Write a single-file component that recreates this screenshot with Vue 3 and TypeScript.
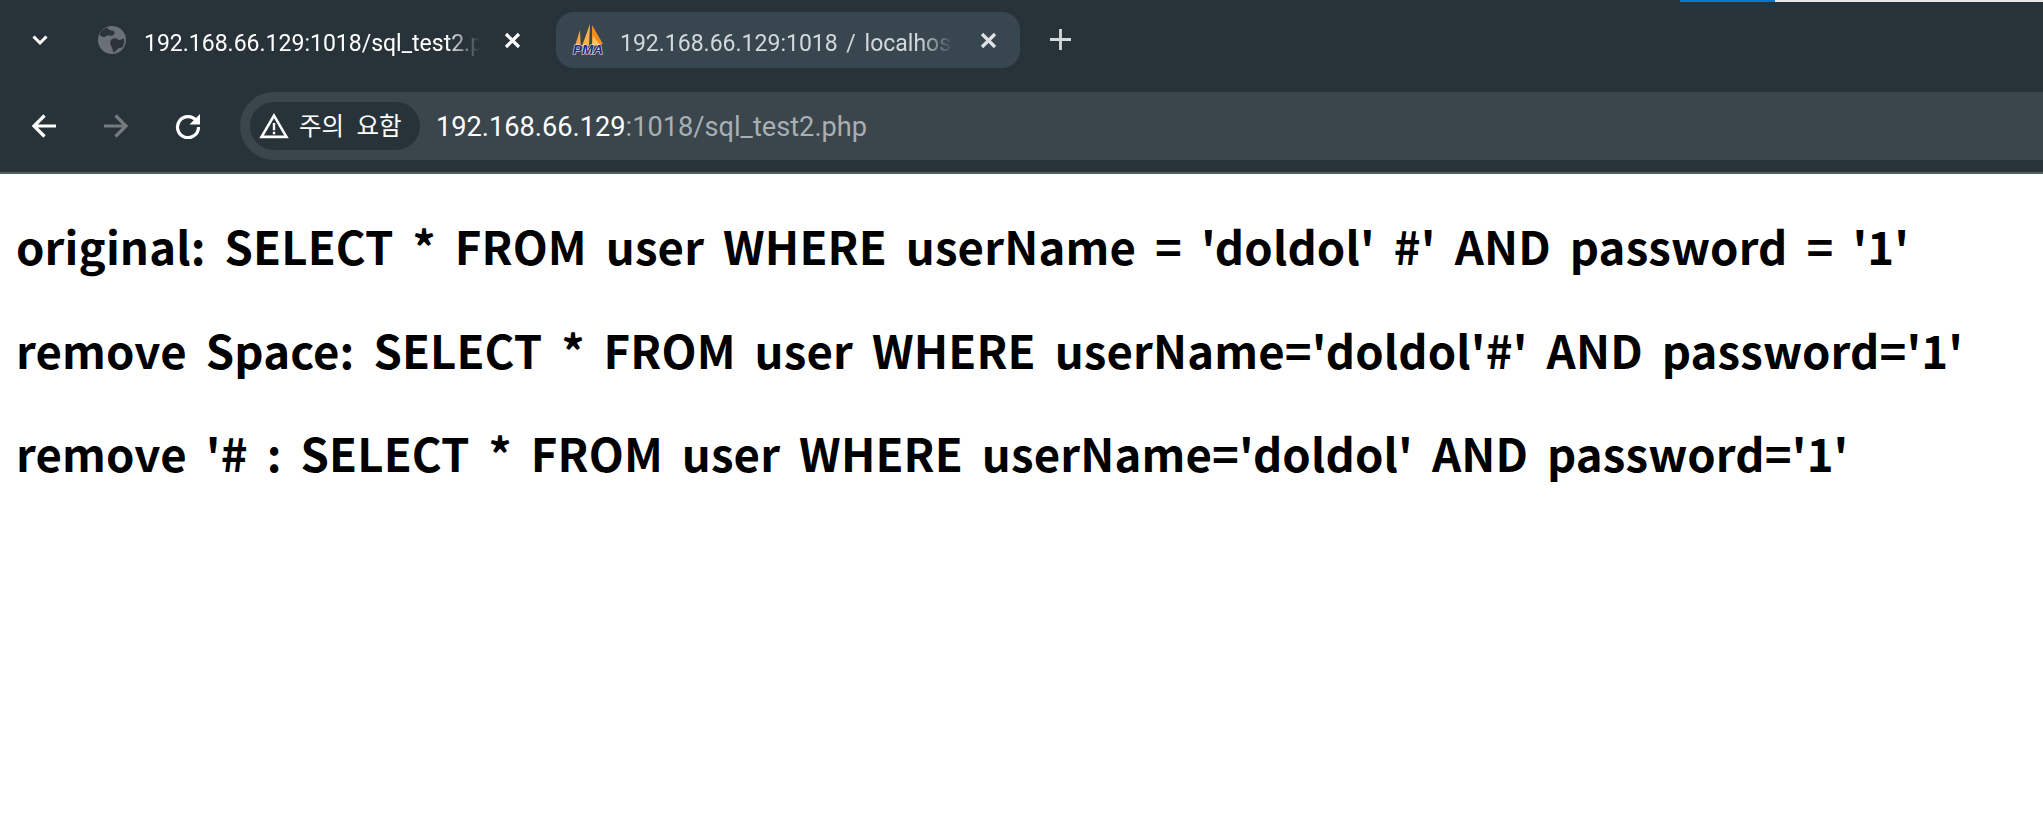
<script setup lang="ts">
const lines: string[] = [
  "original: SELECT * FROM user WHERE userName = 'doldol' #' AND password = '1'",
  "remove Space: SELECT * FROM user WHERE userName='doldol'#' AND password='1'",
  "remove '# : SELECT * FROM user WHERE userName='doldol' AND password='1'",
]
</script>

<template>
  <div class="page">
    <header class="chrome">
      <div class="progress"><span class="progress-blue"></span><span class="progress-light"></span></div>
      <div class="tabstrip">
        <button class="tab-search" aria-label="탭 검색">
          <svg width="18" height="12" viewBox="0 0 18 12"><path d="M2.500 2.500 9 9l6.500-6.500" fill="none" stroke="#fff" stroke-width="3"/></svg>
        </button>
        <div class="tab tab-inactive">
          <svg class="favicon" width="28" height="28" viewBox="0 0 27 27">
            <circle cx="13.500" cy="13.500" r="13.500" fill="#6b7076"/>
            <path d="M9 1.500c1 2.500 3 3 5 3 2.500 0 2.500 2.500 1 4-1.500 1.500-3 1-5 .5-1.500-.4-2 1-3.500 1.500-2 .7-3.500-.5-5-2C2.500 5 5.500 2.500 9 1.500ZM13 13c2-1.500 4-1.500 6 0 1.500 1 3.500 0 6-1 .8 3 0 6-1.500 8.500-2 1-4 .5-5 2-1 1.500-2 2.500-3.500 3-1-2-1-4-2-5.500s-2-5 0-7Z" fill="#2a343a"/>
          </svg>
          <span class="tab-title">192.168.66.129:1018/sql_test2.php</span>
          <svg class="close" width="17" height="17" viewBox="0 0 17 17"><path d="M2 2l13 13M15 2 2 15" stroke="#fff" stroke-width="3.200"/></svg>
        </div>
        <div class="tab tab-other">
          <svg class="favicon" width="32" height="32" viewBox="0 0 32 32">
            <path d="M3 22 8 6l.7 16Z" fill="#f9a63e"/>
            <path d="M10 22 18 0l-1 22Z" fill="#fab04c"/>
            <path d="M20 22V1l11 19Z" fill="#f28c1c"/>
            <path d="M21 12l7 9-8 1Z" fill="#fcc066"/>
            <text x="16" y="30" text-anchor="middle" class="pma">PMA</text>
          </svg>
          <span class="tab-title dim">192.168.66.129:1018 / localhost / sql_test</span>
          <svg class="close" width="17" height="17" viewBox="0 0 17 17"><path d="M2 2l13 13M15 2 2 15" stroke="#dfe2e4" stroke-width="3.200"/></svg>
        </div>
        <button class="new-tab" aria-label="새 탭">
          <svg width="21" height="21" viewBox="0 0 21 21"><path d="M10.500 0v21M0 10.500h21" stroke="#d5d8da" stroke-width="2.800"/></svg>
        </button>
      </div>
      <div class="toolbar">
        <div class="nav">
          <svg width="26" height="26" viewBox="0 0 26 26"><path d="M25 13H4M13.500 2.500 3 13l10.500 10.500" fill="none" stroke="#fff" stroke-width="3.200"/></svg>
          <svg width="26" height="26" viewBox="0 0 26 26"><path d="M1 13h21M12.500 2.500 23 13 12.500 23.500" fill="none" stroke="#747a7e" stroke-width="3.200"/></svg>
          <svg width="26" height="26" viewBox="0 0 26 26"><path d="M21.500 8A10.500 10.500 0 1 0 23.500 14" fill="none" stroke="#fff" stroke-width="3.200"/><path d="M25 1v10.500H14.500Z" fill="#fff"/></svg>
        </div>
        <div class="omnibox">
          <div class="chip">
            <svg width="30" height="26" viewBox="0 0 28 25"><path d="M14 2.500 26 23H2Z" fill="none" stroke="#fff" stroke-width="2.500"/><path d="M14 9.500v7M14 18v2.500" stroke="#fff" stroke-width="2.300"/></svg>
            <span class="chip-label">주의 요함</span>
          </div>
          <div class="url"><span class="host">192.168.66.129</span><span class="rest">:1018/sql_test2.php</span></div>
        </div>
      </div>
    </header>
    <main class="content">
      <h1 v-for="line in lines" :key="line">{{ line }}</h1>
    </main>
  </div>
</template>

<style scoped>
.page { width: 2043px; height: 821px; overflow: hidden; background: #fff; font-family: Roboto, "Noto Sans CJK KR", sans-serif; }
.chrome { position: relative; background: #283239; border-bottom: 2px solid #555f63; height: 172px; }
.progress { position: absolute; top: 0; left: 1680px; right: 0; height: 2px; display: flex; }
.progress-blue { width: 95px; background: #0078d4; }
.progress-light { flex: 1; background: #e8e8e8; }
.tabstrip { height: 92px; display: flex; align-items: flex-start; padding-top: 12px; box-sizing: border-box; }
.tab-search { width: 80px; height: 56px; padding: 0; border: 0; background: none; display: flex; align-items: center; justify-content: center; }
.tab { height: 56px; display: flex; align-items: center; box-sizing: border-box; border-radius: 18px; }
.tab-inactive { width: 460px; margin-right: 16px; padding-left: 18px; padding-right: 19px; }
.tab-other { width: 464px; background: #37464f; padding-left: 16px; padding-right: 23px; }
.favicon { flex: none; overflow: visible; }
.close { flex: none; }
.tab-title { margin-top: 6px; flex: 1; min-width: 0; overflow: hidden; white-space: nowrap; font-size: 23px; color: #fff; -webkit-mask-image: linear-gradient(90deg, #000 90%, transparent 100%); mask-image: linear-gradient(90deg, #000 90%, transparent 100%); }
.tab-inactive .tab-title { margin-left: 18px; margin-right: 24px; }
.tab-other .tab-title { margin-left: 16px; margin-right: 27px; word-spacing: 3px; }
.dim { color: #d4d8da; }
.pma { font: italic 700 13.500px "Liberation Sans", sans-serif; fill: #2a2a70; stroke: #e8e8f0; stroke-width: 1.200px; paint-order: stroke; }
.new-tab { width: 21px; height: 21px; margin: 17px 0 0 30px; padding: 0; border: 0; background: none; display: block; }
.new-tab svg { display: block; }
.toolbar { height: 80px; display: flex; align-items: flex-start; }
.nav { width: 240px; height: 68px; flex: none; display: flex; align-items: center; box-sizing: border-box; padding-left: 31px; gap: 46px; }
.omnibox { flex: 1; height: 68px; background: #3a454c; border-radius: 34px 0 0 34px; display: flex; align-items: center; padding-left: 10px; }
.chip { width: 170px; height: 48px; box-sizing: border-box; border-radius: 24px; background: #283239; display: flex; align-items: center; padding-left: 9px; gap: 10px; color: #fff; font-size: 24.500px; word-spacing: 7px; font-family: "Noto Sans CJK KR", sans-serif; white-space: nowrap; }
.chip-label { margin-top: -4px; }
.url { margin: 2px 0 0 16px; font-size: 27.200px; white-space: nowrap; }
.host { color: #fff; }
.rest { color: #a9afb3; }
.content { padding: 20px 0 0 16px; }
h1 { margin: 0; height: 103.500px; line-height: 103.500px; font-size: 45.500px; letter-spacing: .14px; font-weight: 700; color: #000; white-space: nowrap; font-family: "Noto Sans CJK KR", sans-serif; word-spacing: 8.500px; }
</style>

<style>
html, body { margin: 0; background: #fff; }
</style>
